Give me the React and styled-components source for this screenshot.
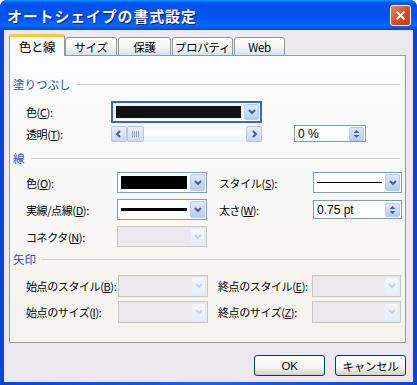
import styled, { createGlobalStyle } from "styled-components";

const Global = createGlobalStyle`
  html, body { margin: 0; padding: 0; background: #fff; }
  body {
    font-family: "Noto Sans CJK JP", "DejaVu Sans", sans-serif;
    font-size: 12px;
    color: #000;
  }
`;

const Window = styled.div`
  width: 417px;
  height: 385px;
  box-sizing: border-box;
  background: linear-gradient(to right, #0a44d8, #1a5ef0 50%, #0a44d8);
  border-radius: 7px 7px 0 0;
  display: flex;
  flex-direction: column;
  overflow: hidden;
`;

const TitleBar = styled.div`
  height: 30px;
  flex: none;
  display: flex;
  align-items: center;
  justify-content: space-between;
  padding: 0 6px 0 7px;
  background: linear-gradient(
    to bottom,
    #0997ff 0%,
    #0053ee 10%,
    #0050ee 50%,
    #0066ff 85%,
    #0049d4 100%
  );
  color: #fff;
  font-weight: bold;
  font-size: 15px;
  letter-spacing: 0.8px;
  text-shadow: 1px 1px 0 #0a1882;
`;

const CloseBtn = styled.div`
  width: 19px;
  height: 19px;
  border: 1px solid #fff;
  border-radius: 3px;
  background: linear-gradient(135deg, #f08a5c 0%, #e0461c 55%, #c93a10 100%);
  display: flex;
  align-items: center;
  justify-content: center;
`;

const Body = styled.div`
  flex: 1;
  margin: 0 4px 3px 4px;
  background: #ebe9ed;
  padding: 4px 7px 0 5px;
  display: flex;
  flex-direction: column;
`;

const Tabs = styled.div`
  display: flex;
  align-items: flex-end;
  height: 22px;
  position: relative;
  z-index: 1;
`;

const Tab = styled.div`
  height: ${(p) => (p.$active ? "22px" : "19px")};
  box-sizing: border-box;
  width: ${(p) => p.$w}px;
  margin-right: ${(p) => (p.$active ? 0 : 1)}px;
  display: flex;
  align-items: center;
  justify-content: center;
  white-space: nowrap;
  border: 1px solid #919b9c;
  border-bottom: ${(p) => (p.$active ? "none" : "1px solid #919b9c")};
  border-radius: 3px 3px 0 0;
  background: ${(p) =>
    p.$active
      ? "#fcfcfe"
      : "linear-gradient(to bottom, #fff 0%, #f3f3ef 60%, #d6dff5 100%)"};
  border-top: ${(p) => (p.$active ? "3px solid #ffc83c" : "1px solid #919b9c")};
  font-size: ${(p) => (p.$active ? 12.5 : 11.5)}px;
  letter-spacing: -0.3px;
  padding-top: ${(p) => (p.$active ? 0 : 1)}px;
`;

const Panel = styled.div`
  height: 288px;
  box-sizing: border-box;
  border: 1px solid #919b9c;
  margin-top: -1px;
  background: linear-gradient(to bottom, #fcfcfe 0%, #f4f3ee 100%);
  padding: 21px 5px 0 3px;
`;

const SectionHead = styled.div`
  display: flex;
  align-items: center;
  gap: 6px;
  color: #1f4dbb;
  font-size: 11.5px;
  height: 14px;
  margin-bottom: ${(p) => p.$mb}px;

  &::after {
    content: "";
    flex: 1;
    height: 1px;
    background: #d0d0bf;
  }
`;

const Grid = styled.div`
  display: grid;
  grid-template-columns: ${(p) => p.$cols};
  row-gap: ${(p) => p.$gap}px;
  align-items: center;
  padding-left: 13px;
  margin-bottom: ${(p) => p.$mb}px;
`;

const Label = styled.span`
  white-space: nowrap;
  font-size: 11px;
  letter-spacing: -0.4px;
  u { text-decoration: underline; text-underline-offset: 1px; }
`;

const Combo = styled.div`
  height: ${(p) => p.$h || 22}px;
  box-sizing: border-box;
  border: ${(p) => (p.$focus ? "2px solid #316ac5" : "1px solid " + (p.$disabled ? "#c9c7ba" : "#7f9db9"))};
  background: ${(p) => (p.$disabled ? "#ebe9ed" : "#fff")};
  display: flex;
  padding: 1px;
  gap: 1px;
`;

const ComboField = styled.div`
  flex: 1;
  display: flex;
  align-items: center;
  padding: 0 2px;
  box-sizing: border-box;
  ${(p) => p.$swatch && `
    background: ${p.$swatch};
    border: 1px solid ${p.$focus ? "#f0f0f0" : "#000"};
    margin: ${p.$focus ? 1 : 2}px;
  `}
`;

const DropBtn = styled.div`
  width: 15px;
  box-sizing: border-box;
  border: 1px solid ${(p) => (p.$disabled ? "#e4ecf9" : "#b8cbf0")};
  border-radius: 2px;
  background: ${(p) =>
    p.$disabled
      ? "linear-gradient(to bottom, #f3f6fd, #e6eefc)"
      : "linear-gradient(to bottom, #dfe9fd, #b5cbf7)"};
  display: flex;
  align-items: center;
  justify-content: center;
`;

const Chevron = ({ dim, dir = "down" }) => {
  const c = dim ? "#c4cfe6" : "#4d6185";
  const d =
    dir === "down"
      ? "M1 2 L4 5 L7 2"
      : dir === "left"
      ? "M5 1 L2 4 L5 7"
      : "M3 1 L6 4 L3 7";
  return (
    <svg width="8" height="8" viewBox="0 0 8 8">
      <path d={d} fill="none" stroke={c} strokeWidth="2" />
    </svg>
  );
};

const LineSample = styled.div`
  flex: 1;
  height: ${(p) => p.$t}px;
  background: #000;
`;

const Scroll = styled.div`
  height: 16px;
  display: flex;
  background: linear-gradient(to bottom, #f3f4f8, #fefefe 40%, #e9eefb);
`;

const ScrollBtn = styled.div`
  width: 16px;
  height: 16px;
  box-sizing: border-box;
  border: 1px solid #b7c5e4;
  border-radius: 2px;
  background: linear-gradient(to bottom, #e6eefc, #c6d6f5);
  display: flex;
  align-items: center;
  justify-content: center;
`;

const Thumb = styled.div`
  width: 17px;
  height: 16px;
  box-sizing: border-box;
  border: 1px solid #b7c5e4;
  border-radius: 2px;
  background: linear-gradient(to bottom, #e9f0fd, #ccdaf5);
  display: flex;
  align-items: center;
  justify-content: center;
  gap: 1px;

  i {
    width: 1px;
    height: 6px;
    background: #8a9ec8;
  }
`;

const Track = styled.div`
  flex: 1;
`;

const Spin = styled.div`
  height: ${(p) => p.$h}px;
  box-sizing: border-box;
  border: 1px solid #7f9db9;
  background: #fff;
  display: flex;
  align-items: center;
  padding: 1px 1px 1px 3px;
  font-family: "Liberation Sans", "DejaVu Sans", sans-serif;
  font-size: 12px;
`;

const SpinText = styled.div`
  flex: 1;
`;

const SpinBtns = styled.div`
  width: 15px;
  height: 14px;
  box-sizing: border-box;
  border: 1px solid #b8cbf0;
  border-radius: 2px;
  background: linear-gradient(to bottom, #dfe9fd, #b5cbf7);
  display: flex;
  align-items: center;
  justify-content: center;
`;

const Footer = styled.div`
  display: flex;
  justify-content: flex-end;
  gap: 10px;
  padding-top: 12px;
`;

const Button = styled.div`
  width: 71px;
  height: 21px;
  box-sizing: border-box;
  border: 1px solid #003c74;
  border-radius: 3px;
  background: linear-gradient(to bottom, #fff 0%, #f4f4f0 60%, #d6d0c5 100%);
  display: flex;
  align-items: center;
  justify-content: center;
  font-family: "Liberation Sans", "Noto Sans CJK JP", sans-serif;
  font-size: 11.5px;
  letter-spacing: -0.3px;
`;

const ArrowUD = () => (
  <svg width="7" height="10" viewBox="0 0 7 10">
    <path d="M0.5 4 L3.5 1 L6.5 4 Z" fill="#4d6185" />
    <path d="M0.5 6 L3.5 9 L6.5 6 Z" fill="#4d6185" />
  </svg>
);

function ComboBox({ focus, swatch, line, disabled, h }) {
  return (
    <Combo $focus={focus} $disabled={disabled} $h={h}>
      {swatch ? (
        <ComboField $swatch={swatch} $focus={focus} />
      ) : (
        <ComboField>{line && <LineSample $t={line} />}</ComboField>
      )}
      <DropBtn $disabled={disabled}>
        <Chevron dim={disabled} />
      </DropBtn>
    </Combo>
  );
}

const L = ({ text, k }) => (
  <Label>
    {text}(<u>{k}</u>):
  </Label>
);

export default function App() {
  return (
    <>
      <Global />
      <Window>
        <TitleBar>
          <span>オートシェイプの書式設定</span>
          <CloseBtn>
            <svg width="11" height="11" viewBox="0 0 11 11">
              <path d="M1.5 1.5 L9.5 9.5 M9.5 1.5 L1.5 9.5" stroke="#fff" strokeWidth="2.2" />
            </svg>
          </CloseBtn>
        </TitleBar>
        <Body>
          <Tabs>
            <Tab $active $w={56}>色と線</Tab>
            <Tab $w={52}>サイズ</Tab>
            <Tab $w={53}>保護</Tab>
            <Tab $w={61}>プロパティ</Tab>
            <Tab $w={51}>Web</Tab>
          </Tabs>
          <Panel>
            <SectionHead $mb={10}>塗りつぶし</SectionHead>
            <Grid $cols="85px 151px 32px 72px" $gap={2} $mb={9}>
              <L text="色" k="C" />
              <ComboBox focus swatch="#111" />
              <span />
              <span />
              <L text="透明" k="T" />
              <Scroll>
                <ScrollBtn><Chevron dir="left" /></ScrollBtn>
                <Thumb><i /><i /><i /><i /></Thumb>
                <Track />
                <ScrollBtn><Chevron dir="right" /></ScrollBtn>
              </Scroll>
              <span />
              <Spin $h={17}>
                <SpinText>0 %</SpinText>
                <SpinBtns><ArrowUD /></SpinBtns>
              </Spin>
            </Grid>
            <SectionHead $mb={7}>線</SectionHead>
            <Grid $cols="91px 90px 12px 94px 89px" $gap={6} $mb={5}>
              <L text="色" k="O" />
              <ComboBox swatch="#000" h={21} />
              <span />
              <L text="スタイル" k="S" />
              <ComboBox line={1} h={21} />
              <L text="実線/点線" k="D" />
              <ComboBox line={3} h={21} />
              <span />
              <L text="太さ" k="W" />
              <Spin $h={19}>
                <SpinText>0.75 pt</SpinText>
                <SpinBtns><ArrowUD /></SpinBtns>
              </Spin>
              <L text="コネクタ" k="N" />
              <ComboBox disabled h={21} />
              <span />
              <span />
              <span />
            </Grid>
            <SectionHead $mb={9}>矢印</SectionHead>
            <Grid $cols="92px 90px 10px 94px 89px" $gap={4} $mb={0}>
              <L text="始点のスタイル" k="B" />
              <ComboBox disabled h={22} />
              <span />
              <L text="終点のスタイル" k="E" />
              <ComboBox disabled h={22} />
              <L text="始点のサイズ" k="I" />
              <ComboBox disabled h={22} />
              <span />
              <L text="終点のサイズ" k="Z" />
              <ComboBox disabled h={22} />
            </Grid>
          </Panel>
          <Footer>
            <Button>OK</Button>
            <Button>キャンセル</Button>
          </Footer>
        </Body>
      </Window>
    </>
  );
}
